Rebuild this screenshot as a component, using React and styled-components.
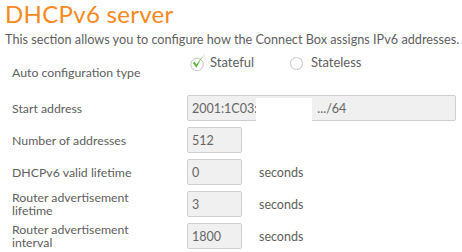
import React from "react";
import styled, { createGlobalStyle } from "styled-components";

const Global = createGlobalStyle`
  body {
    margin: 0;
    background: #fff;
    font-family: Lato, "Open Sans", sans-serif;
  }
`;

const Page = styled.div`
  width: 462px;
  height: 252px;
  overflow: hidden;
  padding: 1px 0 0 5px;
  box-sizing: border-box;
`;

const Title = styled.h1`
  margin: 0;
  font-weight: 400;
  font-size: 24px;
  line-height: 26px;
  color: #f7891f;
  letter-spacing: 0.3px;
`;

const Intro = styled.p`
  margin: 5px 0 0;
  font-size: 12.7px;
  line-height: 14px;
  color: #5f5f5f;
`;

const Form = styled.div`
  display: grid;
  grid-template-columns: 175px 1fr;
  row-gap: 6px;
  margin-top: 5px;
  padding-left: 7px;
`;

const Label = styled.div`
  font-size: 12.3px;
  line-height: 13px;
  color: #606060;
  display: flex;
  align-items: center;
  padding-top: ${({ top }) => top || 0}px;
  align-self: ${({ top }) => (top ? "start" : "center")};
`;

const Field = styled.div`
  display: flex;
  height: ${({ tall }) => (tall ? 38 : 26)}px;
  align-items: ${({ tall }) => (tall ? "flex-start" : "center")};
`;

const Options = styled.div`
  display: flex;
  align-items: center;
  padding: 1px 0 0 2px;
`;

const Option = styled.label`
  display: flex;
  align-items: center;
  font-size: 13px;
  color: #606060;
  width: ${({ w }) => w}px;
  gap: 1px;
`;

const Circle = styled.span`
  width: 13px;
  height: 13px;
  border-radius: 50%;
  border: 1px solid #c6c6c6;
  box-sizing: border-box;
  margin: 3px 7px 0 1px;
  display: inline-block;
`;

const Box = styled.div`
  position: relative;
  box-sizing: border-box;
  height: 26px;
  width: ${({ w }) => w}px;
  background: #f0f0f0;
  border: 1px solid #cfcfcf;
  border-radius: 2px;
  padding: 0 4px;
  display: flex;
  align-items: center;
  font-size: 12.5px;
  color: #666;
`;

const Unit = styled.span`
  margin-left: 17px;
  font-size: 12.5px;
  color: #606060;
`;

const Redact = styled.span`
  position: absolute;
  left: 68px;
  top: 2px;
  width: 56px;
  height: 31px;
  background: #fff;
`;

const Dash = styled.span`
  position: absolute;
  top: 12px;
  left: ${({ x }) => x}px;
  width: 3px;
  height: 1px;
  background: #999;
`;

function CheckCircle() {
  return (
    <svg width="20" height="20" viewBox="0 0 20 20">
      <circle cx="8" cy="12.5" r="6.2" fill="none" stroke="#c6c6c6" strokeWidth="1" />
      <path
        d="M4 11.2 L7.6 15.8 Q10.5 8 16.2 1.8 Q10.6 7.2 7.6 12.5 L5.4 9.6 Z"
        fill="#5fb83a"
      />
    </svg>
  );
}

const rows = [
  { label: "Number of addresses", value: "512" },
  { label: "DHCPv6 valid lifetime", value: "0", unit: true },
  { label: ["Router advertisement", "lifetime"], value: "3", unit: true },
  { label: ["Router advertisement", "interval"], value: "1800", unit: true },
];

export default function App() {
  return (
    <Page>
      <Global />
      <Title>DHCPv6 server</Title>
      <Intro>
        This section allows you to configure how the Connect Box assigns IPv6
        addresses.
      </Intro>
      <Form>
        <Label top={15}>Auto configuration type</Label>
        <Field tall>
          <Options>
            <Option w={100}>
              <CheckCircle />
              Stateful
            </Option>
            <Option w={100}>
              <Circle />
              Stateless
            </Option>
          </Options>
        </Field>

        <Label>Start address</Label>
        <Field>
          <Box w={269}>
            2001:1C03:
            <Dash x={72} />
            <Dash x={94} />
            <span style={{ marginLeft: 60 }}>.../64</span>
            <Redact />
          </Box>
        </Field>

        {rows.map((r, i) => (
          <React.Fragment key={i}>
            <Label>
              {Array.isArray(r.label) ? (
                <span>
                  {r.label[0]}
                  <br />
                  {r.label[1]}
                </span>
              ) : (
                r.label
              )}
            </Label>
            <Field>
              <Box w={55}>{r.value}</Box>
              {r.unit && <Unit>seconds</Unit>}
            </Field>
          </React.Fragment>
        ))}
      </Form>
    </Page>
  );
}
